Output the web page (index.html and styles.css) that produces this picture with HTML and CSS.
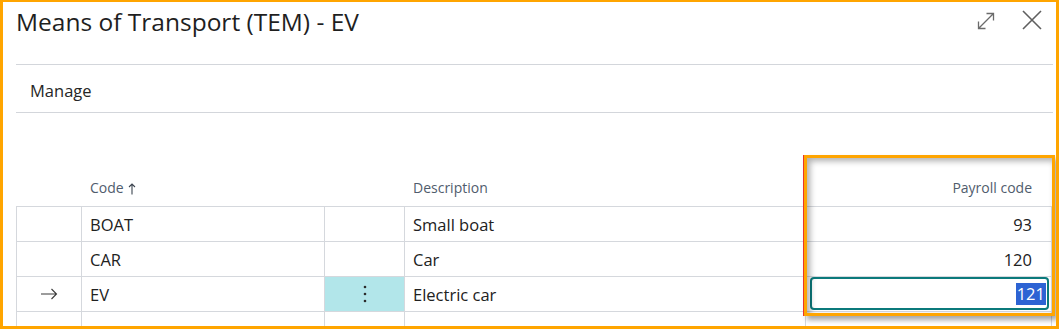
FILE: index.html
```html
<!DOCTYPE html>
<html lang="en">
<head>
<meta charset="utf-8">
<title>Means of Transport (TEM) - EV</title>
<link rel="stylesheet" href="styles.css">
</head>
<body>
<div class="frame">
  <header class="titlebar">
    <h1 class="title">Means of Transport (TEM) - EV</h1>
    <div class="win-actions">
      <svg class="icon-expand" width="20" height="20" viewBox="0 0 20 20" aria-hidden="true">
        <path d="M2.5 17.5 L17.5 2.5 M10.5 2.5 H17.5 V9.5 M2.5 10.5 V17.5 H9.5" fill="none" stroke="#6b6b6b" stroke-width="1.3"/>
      </svg>
      <svg class="icon-close" width="22" height="22" viewBox="0 0 22 22" aria-hidden="true">
        <path d="M2 2 L20 20 M20 2 L2 20" fill="none" stroke="#5f5f5f" stroke-width="1.6"/>
      </svg>
    </div>
  </header>
  <nav class="actionbar">
    <span class="action">Manage</span>
  </nav>
  <div class="grid">
    <div class="hd ind"></div>
    <div class="hd">Code <svg class="sort" width="8" height="12" viewBox="0 0 8 12" aria-hidden="true"><path d="M4 11.5 V1 M1 4 L4 1 L7 4" fill="none" stroke="#3d4550" stroke-width="1.1"/></svg></div>
    <div class="hd"></div>
    <div class="hd">Description</div>
    <div class="hd num">Payroll code</div>

    <div class="c ind"></div>
    <div class="c">BOAT</div>
    <div class="c"></div>
    <div class="c">Small boat</div>
    <div class="c num">93</div>

    <div class="c ind"></div>
    <div class="c">CAR</div>
    <div class="c"></div>
    <div class="c">Car</div>
    <div class="c num">120</div>

    <div class="c ind cur"><svg width="18" height="12" viewBox="0 0 18 12" aria-hidden="true"><path d="M1 6 H16.5 M11.5 1 L16.5 6 L11.5 11" fill="none" stroke="#3a3a3a" stroke-width="1.1"/></svg></div>
    <div class="c">EV</div>
    <div class="c menu"><svg width="4" height="18" viewBox="0 0 4 18" aria-hidden="true"><circle cx="2" cy="2" r="1.3" fill="#2b2b2b"/><circle cx="2" cy="9" r="1.3" fill="#2b2b2b"/><circle cx="2" cy="16" r="1.3" fill="#2b2b2b"/></svg></div>
    <div class="c">Electric car</div>
    <div class="c num edit"><span class="input"><span class="sel">121</span></span></div>

    <div class="c ind"></div>
    <div class="c"></div>
    <div class="c"></div>
    <div class="c"></div>
    <div class="c num"></div>
  </div>
  <div class="highlight"></div>
</div>
</body>
</html>
```

FILE: styles.css
```css
html, body {
  margin: 0;
  padding: 0;
  background: #ffffff;
}
body {
  font-family: "Open Sans", "Noto Sans", sans-serif;
  color: #212121;
}
.frame {
  position: relative;
  box-sizing: border-box;
  width: 1059px;
  height: 329px;
  border-style: solid;
  border-color: #ffa500;
  border-width: 2px 3px 3px 3px;
  overflow: hidden;
  background: #fff;
}
.titlebar {
  display: flex;
  justify-content: space-between;
  align-items: flex-start;
  height: 62px;
  margin: 0 3px 0 13px;
  border-bottom: 1px solid #d3d6db;
}
.title {
  margin: 4px 0 0 0;
  font-size: 24.5px;
  line-height: 32px;
  font-weight: 400;
  color: #1f1f1f;
}
.win-actions {
  display: flex;
  align-items: center;
  gap: 25px;
  padding: 7px 10px 0 0;
}
.icon-expand { display: block; margin-top: 1px; }
.icon-close { display: block; }
.actionbar {
  height: 47px;
  margin: 0 3px 0 13px;
  border-bottom: 1px solid #d3d6db;
  display: flex;
  align-items: center;
}
.action {
  margin-left: 14px;
  font-size: 16.5px;
  color: #262626;
  padding-top: 3px;
}
.grid {
  display: grid;
  grid-template-columns: 66px 243px 80px 401px 246px;
  grid-template-rows: 39px;
  grid-auto-rows: 35px;
  margin: 55px 0 0 13px;
  width: 1036px;
}
.hd {
  box-sizing: border-box;
  border-bottom: 1px solid #d5d8dd;
  font-size: 14px;
  color: #505c6d;
  padding: 2px 8px 0 8px;
  line-height: 20px;
  display: flex;
  align-items: center;
  gap: 4px;
}
.sort { display: block; margin-top: 1px; }
.c {
  box-sizing: border-box;
  border-right: 1px solid #d5d8dd;
  border-bottom: 1px solid #d5d8dd;
  font-size: 16.5px;
  padding: 0 8px;
  display: flex;
  align-items: center;
}
.c.ind {
  border-left: 1px solid #d5d8dd;
  justify-content: center;
}
.c.ind.cur svg { display: block; }
.num {
  justify-content: flex-end;
  padding-right: 19px;
}
.hd.num { padding-right: 20px; }
.menu {
  background: #b2e6ea;
  justify-content: center;
}
.menu svg { display: block; }
.c.edit {
  padding: 0 2px 1px 4px;
  align-items: stretch;
}
.input {
  flex: 1;
  box-sizing: border-box;
  border: 2px solid #0b7a7c;
  border-radius: 4px;
  display: flex;
  align-items: center;
  justify-content: flex-end;
  padding-right: 1px;
}
.sel {
  background: #2d63d3;
  color: #ffffff;
  line-height: 22px;
  padding: 0 1px;
}
.highlight {
  position: absolute;
  left: 801px;
  top: 153px;
  width: 251px;
  height: 161px;
  box-sizing: border-box;
  border: 3px solid #ffa500;
  box-shadow: -1px 0 0 #e8352b, 3px 4px 5px rgba(0,0,0,0.35), inset 3px 3px 6px rgba(0,0,0,0.32);
  pointer-events: none;
}
```
